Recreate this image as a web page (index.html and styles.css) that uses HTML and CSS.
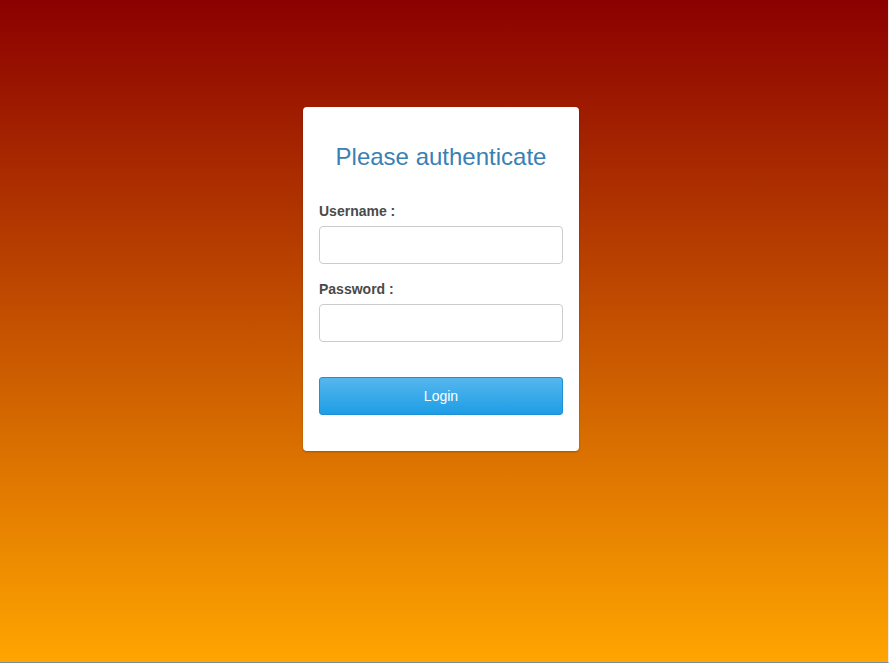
FILE: index.html
```html
<!DOCTYPE html>
<html>
<head>
<meta charset="utf-8">
<link rel="stylesheet" href="styles.css">
</head>
<body>
<div class="page">
  <form class="card">
    <h2 class="title">Please authenticate</h2>
    <label class="label" for="u">Username :</label>
    <input class="field" id="u" type="text">
    <label class="label label-pw" for="p">Password :</label>
    <input class="field" id="p" type="password">
    <button class="btn" type="button">Login</button>
  </form>
</div>
</body>
</html>
```

FILE: styles.css
```css
html, body {
  margin: 0;
  padding: 0;
  height: 100%;
}
body {
  font-family: "Liberation Sans", Arial, sans-serif;
}
.page {
  box-sizing: border-box;
  height: 663px;
  background: linear-gradient(to bottom, #8b0000 0%, #ffa500 100%);
  border-bottom: 1px solid #7b8a9c;
  border-right: 1px solid #e9e9e9;
  display: flex;
  justify-content: center;
  align-items: flex-start;
  padding-top: 107px;
  padding-right: 6px;
}
.card {
  box-sizing: border-box;
  width: 276px;
  height: 344px;
  background: #fff;
  border-radius: 4px;
  box-shadow: 0 1px 2px rgba(0,0,0,0.25);
  padding: 37px 16px 0 16px;
  display: flex;
  flex-direction: column;
}
.title {
  margin: 0;
  font-size: 24px;
  font-weight: normal;
  line-height: 26px;
  color: #3a80b5;
  text-align: center;
}
.label {
  margin-top: 31px;
  font-size: 14px;
  font-weight: bold;
  line-height: 20px;
  color: #4a4a4a;
}
.label-pw {
  margin-top: 15px;
}
.field {
  box-sizing: border-box;
  margin-top: 5px;
  width: 100%;
  height: 38px;
  border: 1px solid #cccccc;
  border-radius: 4px;
  background: #fff;
  outline: none;
}
.btn {
  box-sizing: border-box;
  margin-top: 35px;
  width: 100%;
  height: 38px;
  border: 1px solid #1e8fd6;
  border-radius: 3px;
  background: linear-gradient(to bottom, #56b6ee 0%, #1e9ee5 100%);
  color: #fff;
  font-family: "Liberation Sans", Arial, sans-serif;
  font-size: 14px;
}
```
